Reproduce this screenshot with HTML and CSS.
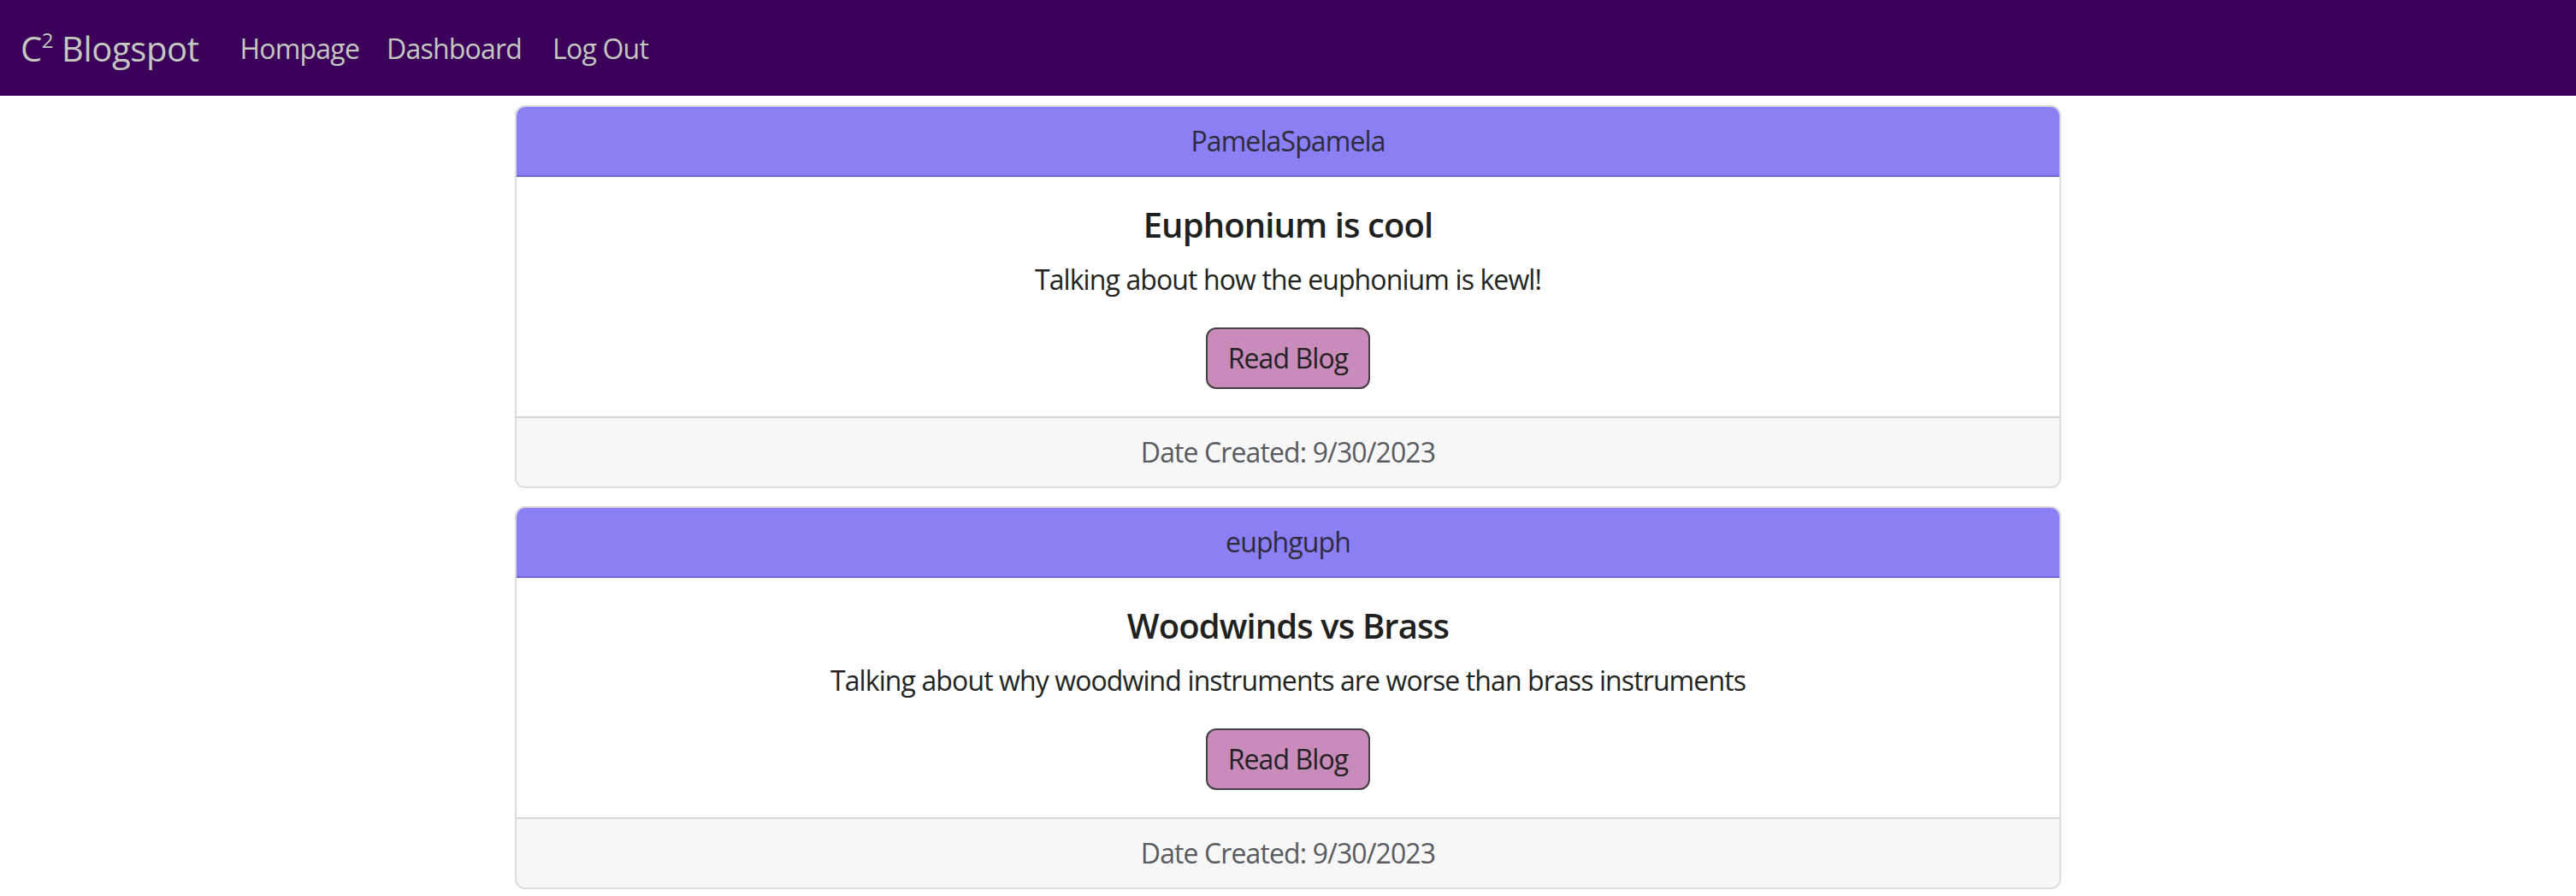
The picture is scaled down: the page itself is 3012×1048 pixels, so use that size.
FILE: index.html
```html
<!DOCTYPE html>
<html lang="en">
<head>
<meta charset="utf-8">
<title>C² Blogspot</title>
<link rel="stylesheet" href="styles.css">
</head>
<body>
<nav class="navbar">
  <a class="brand" href="#">C<sup>2</sup> Blogspot</a>
  <div class="nav-links">
    <a class="nav-link" href="#">Hompage</a>
    <a class="nav-link" href="#">Dashboard</a>
    <a class="nav-link logout" href="#">Log Out</a>
  </div>
</nav>
<main class="posts">
  <article class="card">
    <div class="card-header">PamelaSpamela</div>
    <div class="card-body">
      <h5 class="card-title">Euphonium is cool</h5>
      <p class="card-text">Talking about how the euphonium is kewl!</p>
      <a class="btn" href="#">Read Blog</a>
    </div>
    <div class="card-footer">Date Created: 9/30/2023</div>
  </article>
  <article class="card">
    <div class="card-header">euphguph</div>
    <div class="card-body">
      <h5 class="card-title">Woodwinds vs Brass</h5>
      <p class="card-text">Talking about why woodwind instruments are worse than brass instruments</p>
      <a class="btn" href="#">Read Blog</a>
    </div>
    <div class="card-footer">Date Created: 9/30/2023</div>
  </article>
</main>
</body>
</html>
```
FILE: styles.css
```css
* { box-sizing: border-box; }
html, body {
  margin: 0;
  padding: 0;
  background: #ffffff;
}
body {
  font-family: "Open Sans", "Noto Sans", sans-serif;
  font-size: 32px;
  line-height: 1.5;
  letter-spacing: -0.028em;
  color: #212529;
}
a { text-decoration: none; }

.navbar {
  display: flex;
  align-items: center;
  height: 112px;
  padding: 2px 24px 0;
  background: #3b0059;
}
.brand {
  font-size: 40px;
  line-height: 60px;
  color: #c4c8c1;
  margin-right: 32px;
  white-space: nowrap;
  letter-spacing: -0.01em;
}
.brand sup {
  font-size: 24px;
  line-height: 0;
  position: relative;
  top: -2px;
  vertical-align: super;
}
.nav-links {
  display: flex;
  align-items: center;
}
.nav-link {
  font-size: 32px;
  line-height: 48px;
  padding: 16px 16px;
  color: #c4c8c1;
  letter-spacing: -0.025em;
}
.nav-link.logout { margin-left: 4px; }

.posts {
  display: flex;
  flex-direction: column;
  gap: 21px;
  width: 60%;
  margin: 11px auto 0;
}
.card {
  border: 2px solid #dcdcdc;
  border-radius: 12px;
  overflow: hidden;
  text-align: center;
}
.card-header {
  background: #8a7ff5;
  color: #2e2b3a;
  padding: 16px 32px;
  line-height: 48px;
  border-bottom: 2px solid #7268d4;
}
.card-body {
  padding: 32px;
  background: #ffffff;
}
.card-title {
  margin: 0 0 16px;
  font-size: 40px;
  line-height: 48px;
  font-weight: 600;
  color: #1f2120;
}
.card-text {
  margin: 0 0 32px;
  line-height: 48px;
  color: #212420;
}
.btn {
  display: inline-block;
  padding: 10px 24px;
  line-height: 48px;
  background: #c98bb9;
  color: #222222;
  border: 2px solid #444044;
  border-radius: 12px;
}
.card-footer {
  background: #f7f7f7;
  color: #585b5f;
  border-top: 2px solid #d6d6d6;
  padding: 16px 32px;
  line-height: 48px;
}
```
